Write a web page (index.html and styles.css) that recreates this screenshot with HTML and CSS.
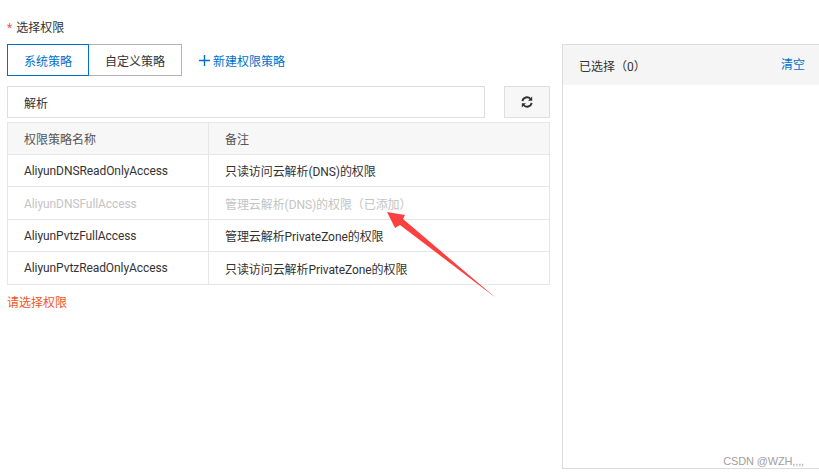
FILE: index.html
```html
<!DOCTYPE html>
<html lang="en">
<head>
    <meta charset="UTF-8">
    <meta name="viewport" content="width=device-width, initial-scale=1.0">
    <title>选择权限</title>
    <link rel="stylesheet" href="styles.css">
</head>
<body>

    <div class="page">
        <div class="left">
            <div class="field-label"><span class="star">*</span> 选择权限</div>

            <div class="tabs">
                <button type="button" class="tab tab-active">系统策略</button>
                <button type="button" class="tab tab-custom">自定义策略</button>
                <a class="new-link">
                    <svg class="plus" width="11" height="11" viewBox="0 0 11 11"><path d="M5.5 0v11M0 5.5h11" stroke="#0070cc" stroke-width="1.4" fill="none"/></svg>
                    新建权限策略
                </a>
            </div>

            <div class="search-row">
                <input class="search" type="text" value="解析">
                <button type="button" class="refresh">
                    <svg width="12" height="12" viewBox="0 0 12 12" fill="none">
                        <path d="M1.4 5.2A4.6 4.6 0 0 1 9.5 3" stroke="#333" stroke-width="1.9"/>
                        <path d="M10.6 6.8A4.6 4.6 0 0 1 2.5 9" stroke="#333" stroke-width="1.9"/>
                        <path d="M11.2 0.6v4.2H7z" fill="#333"/>
                        <path d="M0.8 11.4V7.2H5z" fill="#333"/>
                    </svg>
                </button>
            </div>

            <table class="policy-table">
                <tr class="head">
                    <th class="col-name">权限策略名称</th>
                    <th>备注</th>
                </tr>
                <tr>
                    <td>AliyunDNSReadOnlyAccess</td>
                    <td>只读访问云解析(DNS)的权限</td>
                </tr>
                <tr class="added tall">
                    <td>AliyunDNSFullAccess</td>
                    <td>管理云解析(DNS)的权限（已添加）</td>
                </tr>
                <tr>
                    <td>AliyunPvtzFullAccess</td>
                    <td>管理云解析PrivateZone的权限</td>
                </tr>
                <tr class="tall">
                    <td>AliyunPvtzReadOnlyAccess</td>
                    <td>只读访问云解析PrivateZone的权限</td>
                </tr>
            </table>

            <div class="error-message">请选择权限</div>
        </div>

        <div class="right">
            <div class="right-head">
                <span class="picked">已选择（0）</span>
                <a class="clear">清空</a>
            </div>
        </div>
    </div>

    <!-- red annotation arrow on top of the screenshot -->
    <svg class="arrow" width="819" height="476" viewBox="0 0 819 476">
        <path d="M387 212L405 215L403 219L496 298L400 225L395 228Z" fill="#fb4040"/>
    </svg>

    <div class="watermark">CSDN @WZH,,,,</div>

</body>
</html>
```

FILE: styles.css
```css
* {
    box-sizing: border-box;
}
body {
    margin: 0;
    height: 476px;
    overflow: hidden;
    background: #fff;
    font-family: Roboto, "Noto Sans CJK SC", sans-serif;
    font-size: 12px;
    color: #333;
}
.page {
    display: flex;
    align-items: flex-start;
    padding: 19px 0 0 7px;
}
.left {
    width: 543px;
}
.field-label {
    height: 25px;
    line-height: 18px;
    color: #333;
}
.star {
    margin-right: 1px;
    color: #e85a4a;
}
.tabs {
    display: flex;
    align-items: center;
    height: 32px;
    margin-bottom: 10px;
}
.tab {
    height: 32px;
    padding: 0;
    background: #fff;
    font: inherit;
    color: #333;
    border: 1px solid #b3b3b3;
}
.tab-active {
    width: 82px;
    color: #0070cc;
    border-color: #0070cc;
}
.tab-custom {
    width: 93px;
    border-left: none;
}
.new-link {
    display: flex;
    align-items: center;
    margin-left: 17px;
    color: #0070cc;
}
.plus {
    margin-right: 3px;
}
.search-row {
    display: flex;
    justify-content: space-between;
    margin-bottom: 4px;
}
.search {
    width: 478px;
    height: 32px;
    padding: 1px 16px 0;
    border: 1px solid #dedede;
    font: inherit;
    color: #333;
    outline: none;
}
.refresh {
    display: flex;
    align-items: center;
    justify-content: center;
    width: 46px;
    height: 32px;
    padding: 0;
    background: #f7f7f7;
    border: 1px solid #dedede;
}
.policy-table {
    width: 543px;
    table-layout: fixed;
    border-collapse: collapse;
    border: 1px solid #e6e6e6;
}
.policy-table th,
.policy-table td {
    height: 32px;
    padding: 0 16px;
    text-align: left;
    font-weight: normal;
    letter-spacing: -0.08px;
    border: 1px solid #e6e6e6;
}
.policy-table .tall td {
    height: 33px;
}
.col-name {
    width: 201px;
}
.head th {
    background: #f7f7f7;
    color: #555;
    letter-spacing: 0;
}
.added td {
    padding-top: 1px;
    color: #c4c4c4;
}
.error-message {
    margin-top: 9px;
    line-height: 18px;
    color: #f4532c;
}
.right {
    width: 257px;
    height: 425px;
    margin: 25px 0 0 12px;
    border-left: 1px solid #dcdcdc;
    border-top: 1px solid #dcdcdc;
    border-bottom: 1px solid #dcdcdc;
}
.right-head {
    display: flex;
    justify-content: space-between;
    align-items: center;
    height: 40px;
    padding: 0 14px 0 16px;
    background: #f5f5f5;
    color: #333;
}
.picked {
    margin-top: 1px;
}
.clear {
    color: #0070cc;
    margin-top: -3px;
}
.arrow {
    position: absolute;
    left: 0;
    top: 0;
    pointer-events: none;
}
.watermark {
    position: absolute;
    right: 15px;
    top: 454px;
    font-family: "Liberation Sans", sans-serif;
    font-size: 11px;
    letter-spacing: -0.15px;
    line-height: 14px;
    color: #a0a0a0;
}
```
